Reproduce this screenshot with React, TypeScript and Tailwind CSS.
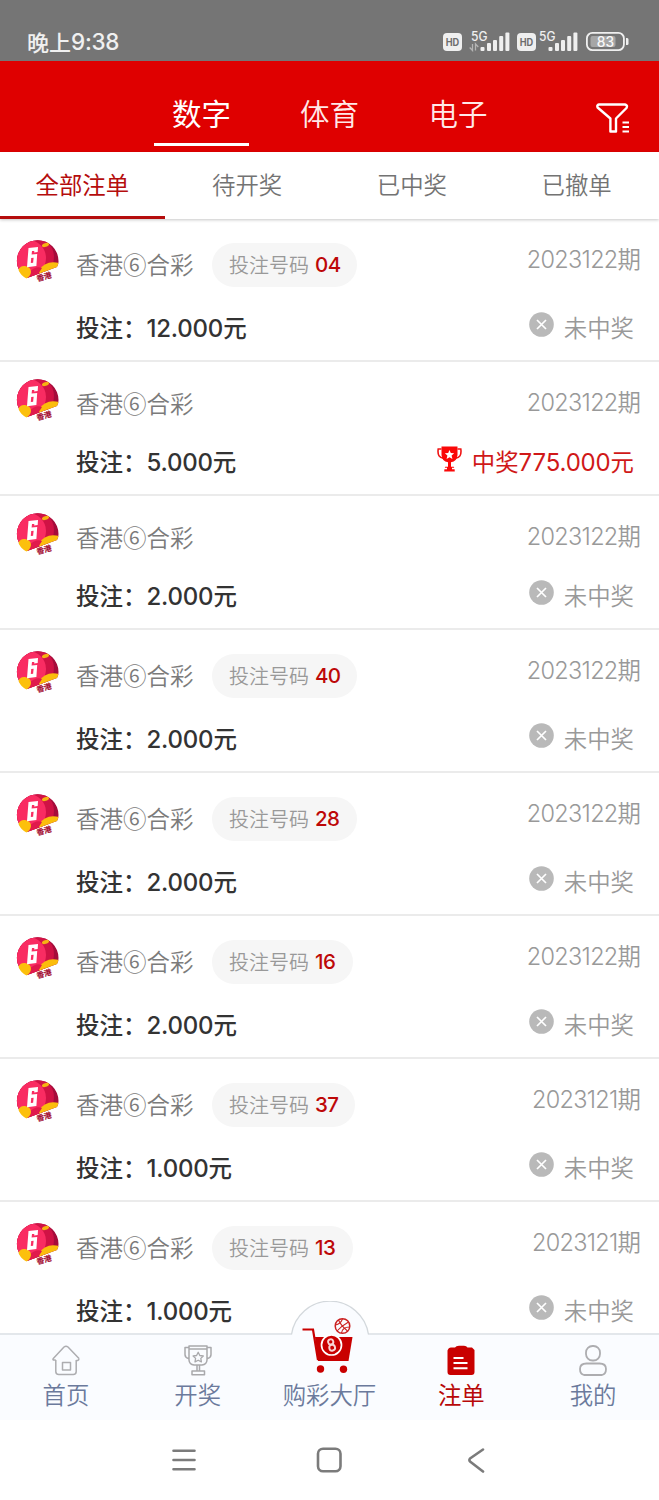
import React from 'react';

type Bet = { period: string; amount: string; code?: string; pill?: string; win?: string };

const bets: Bet[] = [
  { period: '2023122', amount: '12.000', code: '04', pill: 'w-[145px]' },
  { period: '2023122', amount: '5.000', win: '775.000' },
  { period: '2023122', amount: '2.000' },
  { period: '2023122', amount: '2.000', code: '40', pill: 'w-[145px]' },
  { period: '2023122', amount: '2.000', code: '28', pill: 'w-[145px]' },
  { period: '2023122', amount: '2.000', code: '16', pill: 'w-[141px]' },
  { period: '2023121', amount: '1.000', code: '37', pill: 'w-[143px]' },
  { period: '2023121', amount: '1.000', code: '13', pill: 'w-[141px]' },
];

function Num({ children, className = '' }: { children: React.ReactNode; className?: string }) {
  return <span className={`font-['Inter','Noto_Sans_CJK_SC',sans-serif] ${className}`}>{children}</span>;
}

function HdBadge() {
  return (
    <svg width="19" height="18" viewBox="0 0 19 18">
      <rect width="19" height="18" rx="4" fill="#efefef" />
      <text x="9.5" y="12.700" textAnchor="middle" fontFamily="Inter" fontWeight="700" fontSize="10" textLength="13.500" lengthAdjust="spacingAndGlyphs" fill="#6d6d6d">HD</text>
    </svg>
  );
}

function Signal({ data }: { data?: boolean }) {
  return (
    <svg width="41" height="22" viewBox="0 0 41 22" fill="#efefef">
      <text x="2" y="10.500" fontFamily="Inter" fontWeight="500" fontSize="12.500" textLength="16.500" lengthAdjust="spacingAndGlyphs">5G</text>
      {data && (
        <path d="M3.500 14v6.500l-2.800-3M6.500 20.500v-6.500l2.800 3" fill="none" stroke="#b5b5b5" strokeWidth="1.300" />
      )}
      <rect x="11.5" y="17" width="4" height="4" rx="1" />
      <rect x="18" y="13" width="4" height="8" rx="1" />
      <rect x="24" y="10" width="4" height="11" rx="1" />
      <rect x="30.2" y="6" width="4" height="15" rx="1" />
      <rect x="36.4" y="2.5" width="4" height="18.500" rx="1" />
    </svg>
  );
}

function Battery() {
  return (
    <svg width="43" height="19" viewBox="0 0 43 19">
      <rect x="0.9" y="0.9" width="37" height="17.200" rx="5.500" fill="none" stroke="#efefef" strokeWidth="1.8" />
      <rect x="4.500" y="4" width="25" height="11" rx="2" fill="#a6a6a6" />
      <path d="M40 6h1.200q1.300 0 1.300 1.500v4q0 1.500-1.300 1.500H40z" fill="#efefef" />
      <text x="19.500" y="14.500" textAnchor="middle" fontFamily="Inter" fontWeight="500" fontSize="13.800" fill="#f8f8f8">83</text>
    </svg>
  );
}

function FilterIcon() {
  return (
    <svg width="34" height="30" viewBox="0 0 34 30" fill="none" stroke="#fff" strokeWidth="2.4" strokeLinejoin="round" strokeLinecap="round">
      <path d="M3 1.500h26q3 .6 1.500 3.500L20 15.500V28.500h-5.600V15.500L1.600 4.500Q.6 2 3 1.500z" />
      <path d="M26.500 19.500h6.500M26.500 24h6.500M26.500 28.500h6.500" strokeWidth="1.900" strokeLinecap="butt" />
    </svg>
  );
}

function LotteryLogo() {
  return (
    <svg width="44" height="44" viewBox="0 0 44 44">
      <defs>
        <clipPath id="ball">
          <path d="M.9 22A20.800 20.800 0 0 1 42.500 22Q42.700 25 41 28L11 39Q1 33 .9 22z" />
        </clipPath>
      </defs>
      <g clipPath="url(#ball)">
        <rect width="44" height="44" fill="#a50c3b" />
        <circle cx="17" cy="18" r="21" fill="#d01245" />
        <circle cx="12" cy="19" r="18" fill="#f92c62" />
        <path d="M22 32Q30 20.500 43 24V28Q36 34 24 36z" fill="#fbbd0c" />
        <path d="M12 34Q20 26 26 29L21 37L12 40z" fill="#e01a4c" />
      </g>
      <ellipse cx="29.500" cy="6" rx="3.600" ry="1.900" transform="rotate(-15 29.500 6)" fill="#f6b313" />
      <path d="M2.500 31Q4 26.500 9 27Q15 28 15 33Q14.500 37 10.500 39.500Q5 37 2.500 31z" fill="#fcc00c" />
      <path d="M12.500 9l9.500-1-.3 5-3.500.4.1-1.500-2.300.2-.4 3.400 5.600-.5-.8 12-9.400 1.200z" fill="#fff" />
      <path d="M15.200 19l2.400-.2-.5 5-2.300.3z" fill="#f92c62" />
      <text x="21.500" y="42.500" transform="rotate(-15 21.500 42.500)" fontFamily="'Noto Sans CJK SC', sans-serif" fontWeight="700" fontSize="7.600" fill="#a40e32" stroke="#a40e32" strokeWidth=".2">香港</text>
    </svg>
  );
}

function LostIcon() {
  return (
    <svg width="25" height="25" viewBox="0 0 25 25">
      <circle cx="12.500" cy="12.500" r="12.300" fill="#b9b9b9" />
      <path d="M8 8l9 9M17 8l-9 9" stroke="#fff" strokeWidth="1.700" />
    </svg>
  );
}

function CupIcon() {
  return (
    <svg width="25" height="26" viewBox="0 0 25 26">
      <path d="M4.500 3H1.200q-1.300 9 6 9.500M20.500 3h3.300q1.300 9-6 9.500" fill="none" stroke="#f01414" strokeWidth="1.600" />
      <path d="M4.500.5h16V9q-.5 6.500-6.500 7.200v4.500h2.800q1 2 1 4.800H7.200q0-2.800 1-4.800H11v-4.500Q5 15.500 4.500 9z" fill="#fa0808" />
      <path d="M12.500 4l1.300 3 3.400.3-2.600 2.300.8 3.300-2.900-1.700-2.900 1.700.8-3.300-2.600-2.300 3.400-.3z" fill="#fff" />
      <path d="M7 22.500h3M15 22.500h3" stroke="#fff" strokeWidth="1.600" />
    </svg>
  );
}

function BetRow({ bet }: { bet: Bet }) {
  const tall = Boolean(bet.code);
  return (
    <li className={`shrink-0 border-b-2 border-[#ebebeb] pl-4 pr-[18px] pt-[24px] ${tall ? 'h-[143px]' : 'h-[134px]'}`}>
      <div className={`flex items-center ${tall ? 'h-11' : 'h-[35px]'}`}>
        <div className={`w-[60px] self-start ${tall ? '-mt-1' : '-mt-2'}`}><LotteryLogo /></div>
        <span className="w-[136px] text-[23.5px] font-[350] leading-none text-[#7b7b7b]">香港⑥合彩</span>
        {bet.code && (
          <span className={`flex h-11 items-center rounded-[22px] bg-[#f6f6f6] pl-[17px] ${bet.pill}`}>
            <span className="w-[86px] text-[20px] font-[350] leading-none text-[#999]">投注号码</span>
            <Num className="pt-px text-[20.5px] font-medium leading-none tracking-[-0.6px] text-[#bd0808]">{bet.code}</Num>
          </span>
        )}
        <span className="ml-auto flex h-8 items-center self-start leading-none text-[#999]">
          <Num className="pt-px text-[23.5px] font-[350] tracking-[-0.7px]">{bet.period}</Num>
          <span className="text-[23.4px] font-[350]">期</span>
        </span>
      </div>
      <div className="mt-6 flex h-[34px] items-center pl-[60px] pr-[7px]">
        <span className="flex items-center text-[23.5px] font-medium leading-none text-[#333]">
          投注：<Num className="pt-[2px] text-[24px] font-medium tracking-[-0.2px]">{bet.amount}</Num>元
        </span>
        {bet.win ? (
          <span className="ml-auto flex items-center leading-none text-[#d01818]">
            <span className="-mt-1.5 mr-[10px]"><CupIcon /></span>
            <span className="text-[23.4px]">中奖</span>
            <Num className="pt-[2px] text-[24px] tracking-[-0.15px]">{bet.win}</Num>
            <span className="text-[23.4px]">元</span>
          </span>
        ) : (
          <span className="ml-auto flex items-center text-[23.4px] font-[350] leading-none text-[#999]">
            <span className="-mt-2 mr-[10px]"><LostIcon /></span>未中奖
          </span>
        )}
      </div>
    </li>
  );
}

function HomeIcon() {
  return (
    <svg width="28" height="31" viewBox="0 0 28 31" fill="none" stroke="#adadb0" strokeWidth="1.500" strokeLinejoin="round">
      <path d="M3.800 15v11.500q0 3 3 3h14.400q3 0 3-3V15M3.800 15H1.500q-1-.5-.2-1.500L12 2q2-1.500 4 0l11 11.500" />
      <path d="M24.200 15.500h1.500q1.300-.5 1.300-2" />
      <rect x="10.500" y="17.500" width="8" height="7.500" />
    </svg>
  );
}

function PrizeIcon() {
  return (
    <svg width="28" height="31" viewBox="0 0 28 31" fill="none" stroke="#a9a9ac" strokeWidth="1.500" strokeLinejoin="round">
      <path d="M5 4V1h18v3M5 4h18v11q-.3 4.500-5 5h-8q-4.700-.5-5-5zM4.500 2.500H1v7q0 3 3.500 4M23.500 2.500H27v7q0 3-3.500 4M13 20.500v5M15.500 20.500v5M8 26h12.500v3.800H8z" />
      <path d="M14.200 7.300l1.600 3.200 3.500.5-2.500 2.400.6 3.500-3.200-1.700-3.200 1.700.6-3.500L9.100 11l3.500-.5z" strokeWidth="1.300" />
    </svg>
  );
}

function CartBulge() {
  return (
    <svg className="absolute -top-[34px] left-1/2 -translate-x-1/2" width="80" height="76" viewBox="0 0 80 76">
      <path d="M1.500 33.500A38.900 38.900 0 0 1 78.500 33.500V38H1.500z" fill="#fafcff" />
      <path d="M1.500 33.500A38.900 38.900 0 0 1 78.500 33.500" fill="none" stroke="#d3d8dc" strokeWidth="1.300" />
      <g transform="translate(-.5 -1)">
        <path d="M13 29.500h10.500L28.500 60" fill="none" stroke="#c90000" strokeWidth="2.200" />
        <path d="M25.500 37h37.500l-4 24H28.500z" fill="#c90000" />
        <circle cx="42" cy="45" r="10" fill="#c90000" stroke="#fff" strokeWidth="1.700" />
        <g fill="none" stroke="#f8d4d4" strokeWidth="1.900" transform="rotate(-14 42 45)">
          <circle cx="42" cy="41.800" r="2.600" />
          <circle cx="42" cy="47.800" r="2.900" />
        </g>
        <g fill="none" stroke="#cb2222" strokeWidth="1.100">
          <circle cx="53" cy="26" r="7.300" strokeWidth="1.500" />
          <path d="M47.500 31Q52 26 59 22M49 20Q51 25 58 31M46 25Q51 24 53 19M52 33Q53 27 60 27" />
        </g>
        <circle cx="31" cy="69" r="3.700" fill="#c90000" />
        <circle cx="54" cy="69.300" r="3.700" fill="#c90000" />
      </g>
    </svg>
  );
}

function SlipIcon() {
  return (
    <svg width="28" height="31" viewBox="0 0 28 31">
      <path d="M4 2.500h4Q9 1 12 .8h5Q19.500 1 20.500 2.500H25L27.500 5v22q0 3-3 3h-21Q.5 30 .5 27V5.500Q1.500 2.500 4 2.500z" fill="#c90000" />
      <path d="M6.500 13h10M6.500 18h14M6.500 23.200h14" stroke="#fff" strokeWidth="1.900" />
    </svg>
  );
}

function UserIcon() {
  return (
    <svg width="28" height="31" viewBox="0 0 28 31" fill="none" stroke="#adadb0" strokeWidth="1.800">
      <rect x="7" y="1" width="14" height="14.500" rx="6.500" />
      <path d="M5 30q-4-1-4-6 0-5.500 6.500-5.500h13Q27 18.500 27 24q0 5-4 6z" />
    </svg>
  );
}

const navItems = [
  { label: '首页', icon: <HomeIcon /> },
  { label: '开奖', icon: <PrizeIcon /> },
  { label: '购彩大厅', icon: null },
  { label: '注单', icon: <SlipIcon />, active: true },
  { label: '我的', icon: <UserIcon /> },
];

export default function App() {
  return (
    <div className="flex h-[1500px] w-[659px] flex-col overflow-hidden bg-white font-['Noto_Sans_CJK_SC',sans-serif]">
      <div className="flex h-[61px] shrink-0 items-start bg-[#757575] pl-[27px] pr-[30px] text-[#f0f0f0]">
        <div className="mt-[28px] flex items-center text-[22px] font-medium leading-none">
          晚上<Num className="pt-[3px] text-[22.5px] font-medium tracking-[-0.3px]">9:38</Num>
        </div>
        <div className="ml-auto flex items-start pt-[30px]">
          <div className="mt-[3px]"><HdBadge /></div>
          <div className="ml-[7px]"><Signal data /></div>
          <div className="ml-[7px] mt-[3px]"><HdBadge /></div>
          <div className="ml-[1px]"><Signal /></div>
          <div className="ml-2 mt-[2px]"><Battery /></div>
        </div>
      </div>

      <header className="flex h-[91px] shrink-0 bg-[#df0000] pl-[137px] pr-[29px] text-[29.500px] leading-none text-white">
        <div className="flex w-[129px] flex-col items-center pt-[37px]">
          <span>数字</span>
          <span className="mt-[15px] h-[3px] w-[95px] bg-white" />
        </div>
        <div className="w-[127px] pt-[37px] text-center font-[350] text-[#ffe8e8]">体育</div>
        <div className="w-[130px] pt-[37px] text-center font-[350] text-[#ffe8e8]">电子</div>
        <div className="ml-auto mt-[42px]"><FilterIcon /></div>
      </header>

      <nav className="z-10 grid h-[67px] shrink-0 grid-cols-4 bg-white text-center text-[23.400px] font-[350] leading-none text-[#737373] shadow-[0_1px_3px_rgba(0,0,0,0.22)]">
        <span className="border-b-[3px] border-[#b50d0d] pt-[21px] font-normal text-[#b50d0d]">全部注单</span>
        <span className="pt-[21px]">待开奖</span>
        <span className="pt-[21px]">已中奖</span>
        <span className="pt-[21px]">已撤单</span>
      </nav>

      <ul className="flex min-h-0 flex-1 flex-col overflow-hidden">
        {bets.map((bet, i) => <BetRow key={i} bet={bet} />)}
      </ul>

      <nav className="relative grid h-[87px] shrink-0 grid-cols-5 border-t-2 border-[#e3e7eb] bg-[#fafcff] text-[23.400px] leading-none">
        <CartBulge />
        {navItems.map((item) => (
          <div key={item.label} className={`relative flex flex-col items-center pt-[10px] ${item.active ? 'text-[#b80808]' : 'font-[350] text-[#6b7a9c]'}`}>
            <div className="h-[31px]">{item.icon}</div>
            <span className="mt-[7px]">{item.label}</span>
          </div>
        ))}
      </nav>

      <div className="flex h-[80px] shrink-0 items-center justify-center bg-white pr-[2px]">
        <svg width="314" height="26" viewBox="0 0 314 26" fill="none" stroke="#7b7b7b" strokeWidth="2.600" strokeLinecap="round" strokeLinejoin="round">
          <path d="M1.500 3.700h21M1.500 13h21M1.500 22.300h21" />
          <rect x="146" y="1.800" width="22.500" height="22.500" rx="5" />
          <path d="M311 2.500L298 11.500q-1.200 1.500 0 3L311 24.500" />
        </svg>
      </div>
    </div>
  );
}
